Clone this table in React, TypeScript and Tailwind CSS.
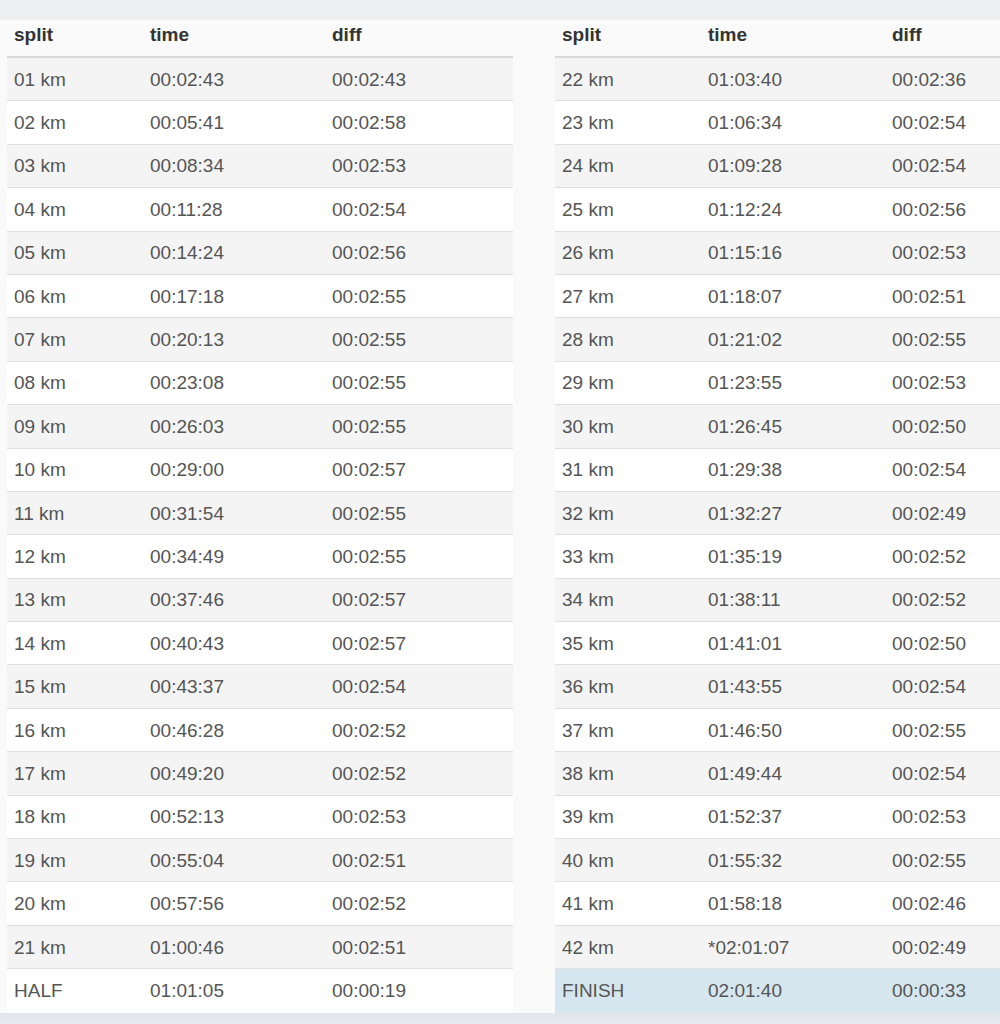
const LEFT = [
  ["01 km", "00:02:43", "00:02:43"],
  ["02 km", "00:05:41", "00:02:58"],
  ["03 km", "00:08:34", "00:02:53"],
  ["04 km", "00:11:28", "00:02:54"],
  ["05 km", "00:14:24", "00:02:56"],
  ["06 km", "00:17:18", "00:02:55"],
  ["07 km", "00:20:13", "00:02:55"],
  ["08 km", "00:23:08", "00:02:55"],
  ["09 km", "00:26:03", "00:02:55"],
  ["10 km", "00:29:00", "00:02:57"],
  ["11 km", "00:31:54", "00:02:55"],
  ["12 km", "00:34:49", "00:02:55"],
  ["13 km", "00:37:46", "00:02:57"],
  ["14 km", "00:40:43", "00:02:57"],
  ["15 km", "00:43:37", "00:02:54"],
  ["16 km", "00:46:28", "00:02:52"],
  ["17 km", "00:49:20", "00:02:52"],
  ["18 km", "00:52:13", "00:02:53"],
  ["19 km", "00:55:04", "00:02:51"],
  ["20 km", "00:57:56", "00:02:52"],
  ["21 km", "01:00:46", "00:02:51"],
  ["HALF", "01:01:05", "00:00:19"],
]

const RIGHT = [
  ["22 km", "01:03:40", "00:02:36"],
  ["23 km", "01:06:34", "00:02:54"],
  ["24 km", "01:09:28", "00:02:54"],
  ["25 km", "01:12:24", "00:02:56"],
  ["26 km", "01:15:16", "00:02:53"],
  ["27 km", "01:18:07", "00:02:51"],
  ["28 km", "01:21:02", "00:02:55"],
  ["29 km", "01:23:55", "00:02:53"],
  ["30 km", "01:26:45", "00:02:50"],
  ["31 km", "01:29:38", "00:02:54"],
  ["32 km", "01:32:27", "00:02:49"],
  ["33 km", "01:35:19", "00:02:52"],
  ["34 km", "01:38:11", "00:02:52"],
  ["35 km", "01:41:01", "00:02:50"],
  ["36 km", "01:43:55", "00:02:54"],
  ["37 km", "01:46:50", "00:02:55"],
  ["38 km", "01:49:44", "00:02:54"],
  ["39 km", "01:52:37", "00:02:53"],
  ["40 km", "01:55:32", "00:02:55"],
  ["41 km", "01:58:18", "00:02:46"],
  ["42 km", "*02:01:07", "00:02:49"],
  ["FINISH", "02:01:40", "00:00:33"],
]

function SplitTable({ rows, cols, highlightLast }: { rows: string[][]; cols: string; highlightLast?: boolean }) {
  return (
    <div className="flex flex-col">
      {/* Header */}
      <div className={`grid ${cols} h-[38px] items-center pb-[7px] border-b-2 border-[#dadada] font-bold text-[#333]`}>
        <div className="px-[7px]">split</div>
        <div className="px-[7px]">time</div>
        <div className="px-[7px]">diff</div>
      </div>
      {rows.map((r, i) => {
        const last = i === rows.length - 1
        const bg = last && highlightLast ? "bg-[#d6e6ee]" : i % 2 === 0 ? "bg-[#f4f4f4]" : "bg-white"
        return (
          <div
            key={r[0]}
            className={`grid ${cols} h-[43.4px] items-center text-[#555] ${bg} ${last ? "" : "border-b border-[#dedede]"}`}
          >
            <div className="px-[7px]">{r[0]}</div>
            <div className="px-[7px]">{r[1]}</div>
            <div className="px-[7px]">{r[2]}</div>
          </div>
        )
      })}
    </div>
  )
}

export default function App() {
  return (
    <div className="w-[1000px] h-[1024px] bg-[#eceef0] pt-[20px] overflow-hidden font-['Liberation_Sans',Arial,sans-serif] text-[19px] leading-none">
      <div className="bg-[#fafafa] flex">
        <div className="ml-[7px] w-[506px]">
          <SplitTable rows={LEFT} cols="grid-cols-[136px_182px_1fr]" />
        </div>
        <div className="ml-[42px] flex-1">
          <SplitTable rows={RIGHT} cols="grid-cols-[146px_184px_1fr]" highlightLast />
        </div>
      </div>
      <div className="h-[12px] bg-gradient-to-b from-[#e1e6ea] to-[#e8ebee]" />
    </div>
  )
}
